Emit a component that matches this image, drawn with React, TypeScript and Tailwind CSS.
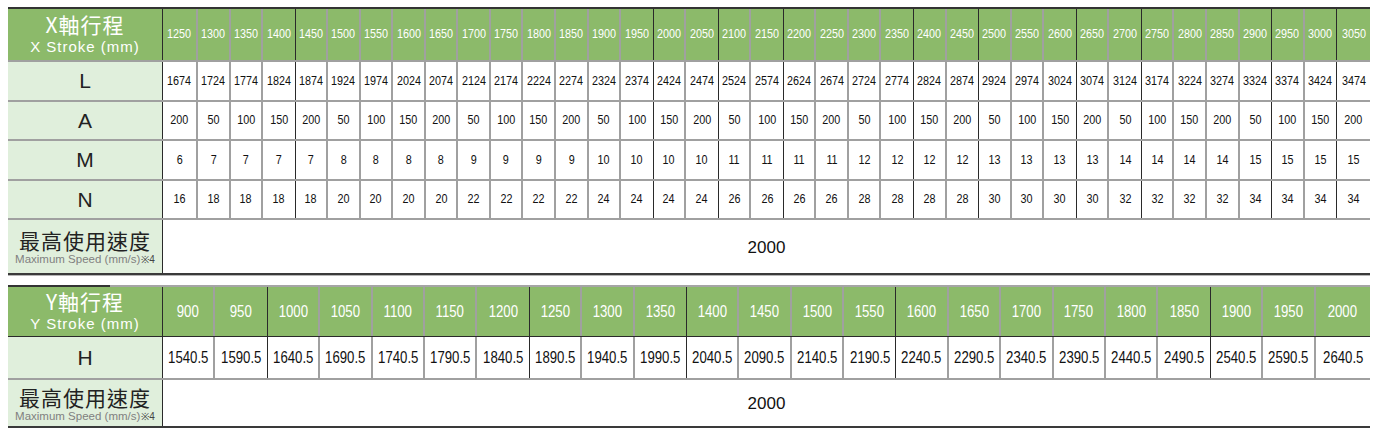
import React from 'react'

const SANS = { fontFamily: '"Liberation Sans", Arial, sans-serif' }
const CJK = { fontFamily: '"Noto Sans CJK TC", "Noto Sans CJK JP", sans-serif' }

const xStroke = Array.from({ length: 37 }, (_, i) => 1250 + i * 50)
const L = xStroke.map((s) => s + 424)
const A = [200, 50, 100, 150, 200, 50, 100, 150, 200, 50, 100, 150, 200, 50, 100, 150, 200, 50, 100, 150, 200, 50, 100, 150, 200, 50, 100, 150, 200, 50, 100, 150, 200, 50, 100, 150, 200]
const M = [6, 7, 7, 7, 7, 8, 8, 8, 8, 9, 9, 9, 9, 10, 10, 10, 10, 11, 11, 11, 11, 12, 12, 12, 12, 13, 13, 13, 13, 14, 14, 14, 14, 15, 15, 15, 15]
const N = [16, 18, 18, 18, 18, 20, 20, 20, 20, 22, 22, 22, 22, 24, 24, 24, 24, 26, 26, 26, 26, 28, 28, 28, 28, 30, 30, 30, 30, 32, 32, 32, 32, 34, 34, 34, 34]

const yStroke = Array.from({ length: 23 }, (_, i) => 900 + i * 50)
const H = yStroke.map((s) => (s + 640.5).toFixed(1))

// g = grey rule, k = thin black rule (the source table mixes both)
const xLines = 'gggkggggggggggkgkgkgggkgkggkgkgggkgkk'
const yLines = 'gkggggkggkgggkgggggkgg'

function lineCls(c: string) {
  return c === 'k' ? 'border-r border-[#2a2a2a]' : 'border-r-2 border-[#a0a0a0]'
}

function xWidth(i: number) {
  if (i === 0) return 'w-[35px]'
  if (i === 36) return 'flex-1 min-w-0'
  return 'w-[32.56px]'
}

// condensed numerals: no narrow face is installed, so squeeze Liberation Sans
function Num({ v }: { v: number | string }) {
  return <span className="inline-block scale-x-[0.8] whitespace-nowrap" style={SANS}>{v}</span>
}

function Label({ children }: { children: React.ReactNode }) {
  return (
    <div className="w-[155px] shrink-0 h-full bg-[#e0efdc] border-r border-[#2a2a2a] flex items-center justify-center text-[21px] text-[#222]" style={SANS}>
      {children}
    </div>
  )
}

function SpeedLabel() {
  return (
    <div className="w-[155px] shrink-0 h-full bg-[#e0efdc] border-r border-[#2a2a2a] flex flex-col items-center justify-center pt-[2px]">
      <div className="text-[21px] leading-[24px] text-[#222] tracking-[1px]" style={CJK}>
        最高使用速度
      </div>
      <div className="text-[11.5px] leading-[15px] text-[#808080] whitespace-nowrap" style={SANS}>
        Maximum Speed (mm/s)<span className="text-[#444] text-[10px] ml-px">※4</span>
      </div>
    </div>
  )
}

function HeadLabel({ axis }: { axis: string }) {
  return (
    <div className="w-[155px] shrink-0 h-full bg-[#8cba6a] border-r border-[#2a2a2a] flex flex-col items-center justify-center text-white">
      <div className="text-[21px] leading-[23px] tracking-[1px] mb-[2px]" style={CJK}>
        {axis}軸行程
      </div>
      <div className="text-[15px] leading-[18px] tracking-[1px]" style={SANS}>
        {axis} Stroke (mm)
      </div>
    </div>
  )
}

function XRow({ label, values, head }: { label?: string; values: (number | string)[]; head?: boolean }) {
  return (
    <div className={`flex ${head ? 'h-[53px]' : 'h-[39.5px]'} border-b-2 border-[#a0a0a0]`}>
      {head ? <HeadLabel axis="X" /> : <Label>{label}</Label>}
      {values.map((v, i) => (
        <div
          key={i}
          className={`${xWidth(i)} shrink-0 h-full flex items-center justify-center overflow-hidden text-[13.5px] ${i < 36 ? lineCls(xLines[i]) : ''} ${head ? 'bg-[#8cba6a] text-white' : 'bg-white text-[#111]'}`}
        >
          <Num v={v} />
        </div>
      ))}
    </div>
  )
}

function YRow({ values, head }: { values: (number | string)[]; head?: boolean }) {
  return (
    <div className={`flex ${head ? 'h-[50px] border-b border-[#2a2a2a]' : 'h-[43px] border-b-2 border-[#a0a0a0]'}`}>
      {head ? <HeadLabel axis="Y" /> : <Label>H</Label>}
      {values.map((v, i) => (
        <div
          key={i}
          className={`${i === 22 ? 'flex-1 min-w-0' : 'w-[52.4px]'} shrink-0 h-full flex items-center justify-center overflow-hidden text-[16.5px] ${i < 22 ? lineCls(yLines[i]) : ''} ${head ? 'bg-[#8cba6a] text-white' : 'bg-white text-[#111]'}`}
        >
          <Num v={v} />
        </div>
      ))}
    </div>
  )
}

function SpeedRow({ h }: { h: string }) {
  return (
    <div className={`flex ${h}`}>
      <SpeedLabel />
      <div className="flex-1 flex items-center justify-center bg-white text-[17px] text-[#111] pt-[2px]" style={SANS}>
        2000
      </div>
    </div>
  )
}

export default function App() {
  return (
    <div className="w-[1375px] h-[432px] bg-white pt-[7px] pl-2 overflow-hidden">
      {/* X axis table */}
      <div className="w-[1362px] border-t-2 border-[#333]">
        <XRow head values={xStroke} />
        <XRow label="L" values={L} />
        <XRow label="A" values={A} />
        <XRow label="M" values={M} />
        <XRow label="N" values={N} />
        <SpeedRow h="h-[53px]" />
        <div className="h-[2px] bg-[#3a3a3a]" />
        <div className="h-px bg-[#b5b5b5]" />
      </div>

      {/* Y axis table */}
      <div className="w-[1362px] mt-[9px]">
        <div className="flex h-[2px]">
          <div className="w-[102px] bg-[#333]" />
          <div className="flex-1 bg-[#a5a5a5]" />
        </div>
        <YRow head values={yStroke} />
        <YRow values={H} />
        <SpeedRow h="h-[46px]" />
        <div className="h-[2px] bg-[#3a3a3a]" />
      </div>
    </div>
  )
}
